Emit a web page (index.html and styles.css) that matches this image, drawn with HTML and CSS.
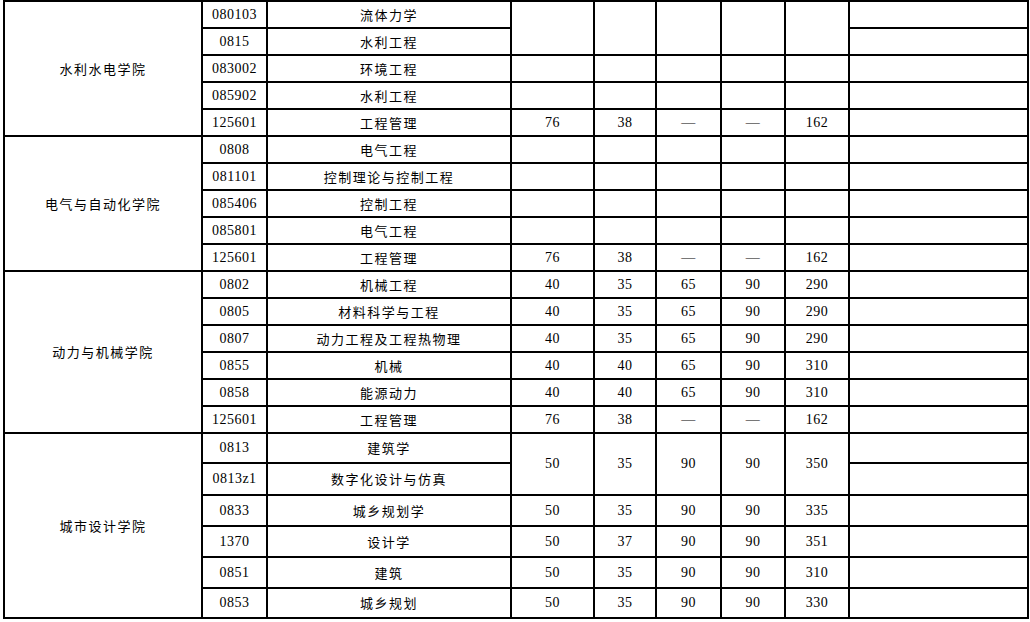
FILE: index.html
```html
<!DOCTYPE html>
<html lang="zh-CN">
<head>
<meta charset="utf-8">
<title>分数线</title>
<link rel="stylesheet" href="styles.css">
</head>
<body>
<table class="score">
<colgroup>
<col class="c-college"><col class="c-code"><col class="c-name"><col class="c-s1"><col class="c-s2"><col class="c-s3"><col class="c-s4"><col class="c-total"><col class="c-note">
</colgroup>
<tbody>
<tr class="r"><td rowspan="5" class="college">水利水电学院</td><td>080103</td><td class="zh">流体力学</td><td rowspan="2"></td><td rowspan="2"></td><td rowspan="2"></td><td rowspan="2"></td><td rowspan="2"></td><td></td></tr>
<tr class="r"><td>0815</td><td class="zh">水利工程</td><td></td></tr>
<tr class="r"><td>083002</td><td class="zh">环境工程</td><td></td><td></td><td></td><td></td><td></td><td></td></tr>
<tr class="r"><td>085902</td><td class="zh">水利工程</td><td></td><td></td><td></td><td></td><td></td><td></td></tr>
<tr class="r"><td>125601</td><td class="zh">工程管理</td><td>76</td><td>38</td><td>—</td><td>—</td><td>162</td><td></td></tr>

<tr class="r"><td rowspan="5" class="college">电气与自动化学院</td><td>0808</td><td class="zh">电气工程</td><td></td><td></td><td></td><td></td><td></td><td></td></tr>
<tr class="r"><td>081101</td><td class="zh">控制理论与控制工程</td><td></td><td></td><td></td><td></td><td></td><td></td></tr>
<tr class="r"><td>085406</td><td class="zh">控制工程</td><td></td><td></td><td></td><td></td><td></td><td></td></tr>
<tr class="r"><td>085801</td><td class="zh">电气工程</td><td></td><td></td><td></td><td></td><td></td><td></td></tr>
<tr class="r"><td>125601</td><td class="zh">工程管理</td><td>76</td><td>38</td><td>—</td><td>—</td><td>162</td><td></td></tr>

<tr class="r"><td rowspan="6" class="college">动力与机械学院</td><td>0802</td><td class="zh">机械工程</td><td>40</td><td>35</td><td>65</td><td>90</td><td>290</td><td></td></tr>
<tr class="r"><td>0805</td><td class="zh">材料科学与工程</td><td>40</td><td>35</td><td>65</td><td>90</td><td>290</td><td></td></tr>
<tr class="r"><td>0807</td><td class="zh">动力工程及工程热物理</td><td>40</td><td>35</td><td>65</td><td>90</td><td>290</td><td></td></tr>
<tr class="r"><td>0855</td><td class="zh">机械</td><td>40</td><td>40</td><td>65</td><td>90</td><td>310</td><td></td></tr>
<tr class="r"><td>0858</td><td class="zh">能源动力</td><td>40</td><td>40</td><td>65</td><td>90</td><td>310</td><td></td></tr>
<tr class="r"><td>125601</td><td class="zh">工程管理</td><td>76</td><td>38</td><td>—</td><td>—</td><td>162</td><td></td></tr>

<tr class="t h30"><td rowspan="6" class="college">城市设计学院</td><td>0813</td><td class="zh">建筑学</td><td rowspan="2">50</td><td rowspan="2">35</td><td rowspan="2">90</td><td rowspan="2">90</td><td rowspan="2">350</td><td></td></tr>
<tr class="t h32"><td>0813z1</td><td class="zh">数字化设计与仿真</td><td></td></tr>
<tr class="t"><td>0833</td><td class="zh">城乡规划学</td><td>50</td><td>35</td><td>90</td><td>90</td><td>335</td><td></td></tr>
<tr class="t"><td>1370</td><td class="zh">设计学</td><td>50</td><td>37</td><td>90</td><td>90</td><td>351</td><td></td></tr>
<tr class="t"><td>0851</td><td class="zh">建筑</td><td>50</td><td>35</td><td>90</td><td>90</td><td>310</td><td></td></tr>
<tr class="t h30"><td>0853</td><td class="zh">城乡规划</td><td>50</td><td>35</td><td>90</td><td>90</td><td>330</td><td></td></tr>
</tbody>
</table>
</body>
</html>
```

FILE: styles.css
```css
html, body {
  margin: 0;
  padding: 0;
  background: #ffffff;
}

.score {
  margin-left: 3px;
  border-collapse: collapse;
  table-layout: fixed;
  width: 1024px;
  font-family: "Liberation Serif", "Noto Sans CJK SC", serif;
  font-size: 14px;
  color: #000000;
  letter-spacing: 0.5px;
}

.c-college { width: 198px; }
.c-code { width: 65px; }
.c-name { width: 244px; }
.c-s1 { width: 83px; }
.c-s2 { width: 62px; }
.c-s3 { width: 65px; }
.c-s4 { width: 64px; }
.c-total { width: 64px; }
.c-note { width: 179px; }

.score td {
  border: 2px solid #000000;
  padding: 0;
  text-align: center;
  vertical-align: middle;
  line-height: 16px;
  white-space: nowrap;
  overflow: hidden;
}

.score tr.r { height: 27px; }
.score tr.t { height: 31px; }
.score tr.h30 { height: 30px; }
.score tr.h32 { height: 32px; }

.score td.zh,
.score td.college {
  font-family: "Noto Sans CJK SC", sans-serif;
  font-size: 13px;
  letter-spacing: 1.5px;
}
```
